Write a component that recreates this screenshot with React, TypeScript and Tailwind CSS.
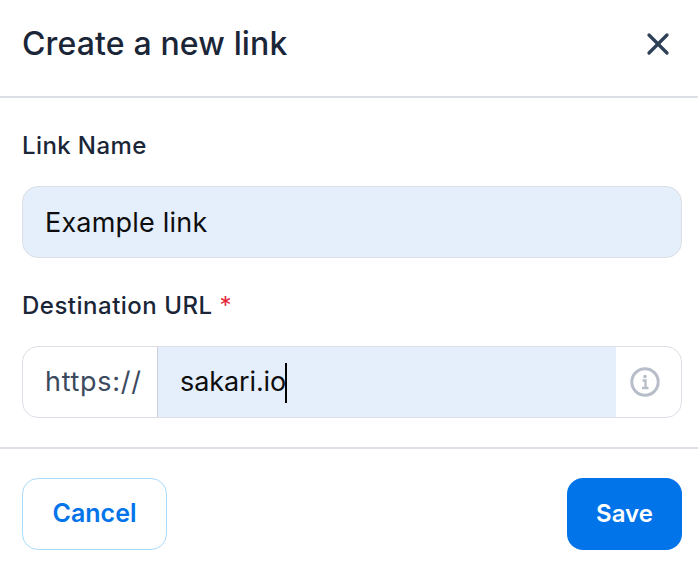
import { X } from 'lucide-react';

export default function App() {
  return (
    <div className="w-[698px] h-[570px] bg-white overflow-hidden font-['Inter',sans-serif]">
      <header className="h-[98px] border-b-2 border-[#dcdfe6] flex items-center justify-between pl-[22px] pr-[22px] pb-[8px]">
        <h1 className="text-[32px] font-medium text-[#1a2638] tracking-[0.15px]">Create a new link</h1>
        <X className="w-[36px] h-[36px] text-[#2f4158] -mt-[1px]" strokeWidth={2.2} />
      </header>

      <div className="pl-[22px] pr-[16px] h-[351px] border-b-2 border-[#dcdfe6] flex flex-col">
        <label className="mt-[33px] h-[30px] leading-[30px] text-[24px] font-medium text-[#1a2638] tracking-[0.4px]">Link Name</label>
        <div className="mt-[25px] h-[72px] rounded-2xl border border-[#dcdfe6] bg-[#e5effb] pl-[22px] pt-[2px] flex items-center text-[27px] text-[#0d0d0d] tracking-[0.2px]">
          Example link
        </div>
        <label className="mt-[33px] h-[30px] leading-[30px] text-[24px] font-medium text-[#1a2638] tracking-[0.5px]">
          Destination URL <span className="text-[#e5263b] font-normal">*</span>
        </label>
        <div className="mt-[25px] h-[72px] rounded-2xl border border-[#dcdfe6] flex overflow-hidden">
          <div className="w-[135px] border-r border-[#ccd0da] pl-[22px] pt-[1px] flex items-center text-[27px] text-[#3c4a5e] tracking-[0.7px]">https://</div>
          <div className="flex-1 bg-[#e5effb] pl-[22px] pt-[1px] flex items-center text-[27px] text-[#0d0d0d] tracking-[-0.1px]">
            sakari.io<span className="w-[2px] h-[40px] bg-black -ml-[1px]" />
          </div>
          <div className="w-[65px] flex items-center justify-center pr-[7px]">
            <svg width="30" height="30" viewBox="0 0 30 30" fill="none">
              <circle cx="15" cy="15" r="13.2" stroke="#b8bec9" strokeWidth="3" />
              <circle cx="15" cy="9.5" r="1.8" fill="#b8bec9" />
              <path d="M12.5 13.5H15.5V20.5M12 21H18.5" stroke="#b8bec9" strokeWidth="2.4" />
            </svg>
          </div>
        </div>
      </div>

      <footer className="flex justify-between pl-[22px] pr-[16px] pt-[29px]">
        <button className="w-[145px] h-[72px] rounded-2xl border border-[#a9dcfb] bg-white text-[25px] font-semibold text-[#0274ea]">Cancel</button>
        <button className="w-[115px] h-[72px] rounded-2xl bg-[#0274ea] text-[24px] font-semibold text-white">Save</button>
      </footer>
    </div>
  );
}
